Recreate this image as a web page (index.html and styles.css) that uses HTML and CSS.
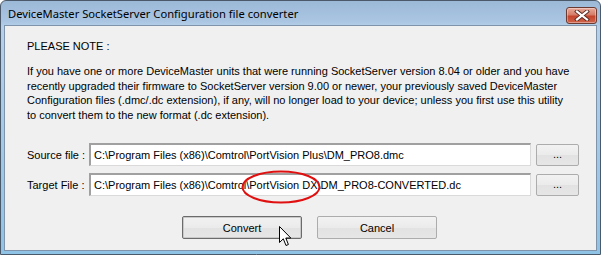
FILE: index.html
```html
<!DOCTYPE html>
<html>
<head>
<meta charset="utf-8">
<link rel="stylesheet" href="styles.css">
</head>
<body>
<div class="window">
  <div class="titlebar">
    <span class="title">DeviceMaster SocketServer Configuration file converter</span>
    <div class="close">
      <svg width="16" height="11" viewBox="0 0 16 11"><path d="M3 1.5 L13 9.5 M13 1.5 L3 9.5" stroke="#5a2a22" stroke-width="4" stroke-linecap="square"/><path d="M3 1.5 L13 9.5 M13 1.5 L3 9.5" stroke="#ffffff" stroke-width="2.2" stroke-linecap="square"/></svg>
    </div>
  </div>
  <div class="client">
    <div class="note">PLEASE NOTE :</div>
    <div class="para">If you have one or more DeviceMaster units that were running SocketServer version 8.04 or older and you have<br>recently upgraded their firmware to SocketServer version 9.00 or newer, your previously saved DeviceMaster<br>Configuration files (.dmc/.dc extension), if any, will no longer load to your device; unless you first use this utility<br>to convert them to the new format (.dc extension).</div>
    <div class="row row-source">
      <span class="label">Source file :</span>
      <div class="field">C:\Program Files (x86)\Comtrol\PortVision Plus\DM_PRO8.dmc</div>
      <div class="btn dots">...</div>
    </div>
    <div class="row row-target">
      <span class="label">Target File :</span>
      <div class="field">C:\Program Files (x86)\Comtrol\PortVision DX\DM_PRO8-CONVERTED.dc</div>
      <div class="btn dots">...</div>
    </div>
    <div class="actions">
      <div class="btn action default">Convert</div>
      <div class="btn action">Cancel</div>
    </div>
  </div>
  <svg class="ellipse" width="82" height="34" viewBox="0 0 82 34"><ellipse cx="41" cy="17" rx="38.5" ry="15.5" fill="none" stroke="#e01010" stroke-width="2"/></svg>
  <svg class="cursor" width="13" height="21" viewBox="0 0 13 21"><path d="M0.5 0.5 L0.5 16.5 L4.3 12.8 L7 19.5 L9.4 18.5 L6.8 12 L11.8 12 Z" fill="#ffffff" stroke="#000000" stroke-width="1" stroke-linejoin="miter"/></svg>
</div>
</body>
</html>
```

FILE: styles.css
```css
html, body {
  margin: 0;
  padding: 0;
  background: #ffffff;
}
.window {
  position: relative;
  box-sizing: border-box;
  width: 601px;
  height: 255px;
  border: 1px solid #4b5a6b;
  border-radius: 6px 6px 0 0;
  background: linear-gradient(to bottom, #9cb9d7 0px, #a9c5e2 20px, #b6d0ea 26px, #8fc3e6 100%);
  display: flex;
  flex-direction: column;
  padding: 0 3px 3px 3px;
  overflow: hidden;
}
.titlebar {
  height: 24px;
  display: flex;
  align-items: center;
  justify-content: space-between;
  flex: none;
}
.title {
  font-family: "Noto Sans", "Open Sans", sans-serif;
  font-size: 11.2px;
  color: #000000;
  padding-left: 4px;
  padding-top: 1px;
}
.close {
  width: 31px;
  height: 17px;
  box-sizing: border-box;
  margin-right: 0;
  margin-top: 4px;
  border: 1px solid #6b3b31;
  border-radius: 3px;
  background: linear-gradient(to bottom, #e8aa9b 0%, #d57d68 45%, #c4432b 55%, #d0644c 100%);
  display: flex;
  align-items: center;
  justify-content: center;
  box-shadow: inset 0 0 0 1px rgba(255,255,255,0.35);
}
.client {
  flex: 1;
  background: #f0f0f0;
  border: 1px solid #7f93aa;
  padding: 13px 0 0 22px;
  font-family: "Liberation Sans", Arial, sans-serif;
  font-size: 11px;
  color: #000000;
}
.note {
  line-height: 14px;
}
.para {
  margin-top: 11px;
  line-height: 14.5px;
  white-space: nowrap;
}
.row {
  display: flex;
  align-items: center;
  height: 23px;
}
.row-source {
  margin-top: 21px;
}
.row-target {
  margin-top: 7px;
}
.label {
  width: 62px;
  white-space: nowrap;
}
.field {
  width: 442px;
  height: 23px;
  box-sizing: border-box;
  background: #ffffff;
  border-top: 2px solid #a0a0a0;
  border-left: 2px solid #a0a0a0;
  border-right: 1px solid #dadada;
  border-bottom: 1px solid #dadada;
  padding: 2px 0 0 3px;
  line-height: 17px;
  white-space: nowrap;
  overflow: hidden;
}
.btn {
  box-sizing: border-box;
  background: linear-gradient(to bottom, #f2f2f2 0%, #ebebeb 50%, #e2e2e2 51%, #e6e6e6 100%);
  border: 1px solid #acacac;
  border-radius: 2px;
  display: flex;
  align-items: center;
  justify-content: center;
  color: #000000;
}
.dots {
  width: 43px;
  height: 22px;
  margin-left: 5px;
  padding-bottom: 1px;
}
.actions {
  display: flex;
  gap: 15px;
  margin-top: 20px;
  margin-left: 155px;
}
.action {
  width: 120px;
  height: 23px;
}
.default {
  border: 1px solid #6b6b6b;
  box-shadow: inset 0 0 0 1px #c9c9c9;
}
.ellipse {
  position: absolute;
  left: 239px;
  top: 169px;
}
.cursor {
  position: absolute;
  left: 278px;
  top: 225px;
}
```
